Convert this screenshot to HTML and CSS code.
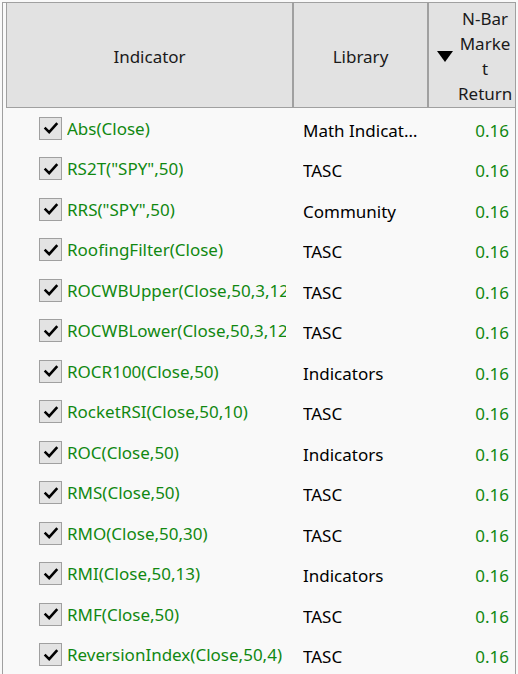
FILE: index.html
```html
<!DOCTYPE html>
<html>
<head>
<meta charset="utf-8">
<link rel="stylesheet" href="styles.css">
</head>
<body>
<div class="frame">
  <div class="grid">
    <div class="hrow">
      <div class="hcell c1">Indicator</div>
      <div class="hcell c2">Library</div>
      <div class="hcell c3"><span class="tri"></span><span class="htext">N-Bar<br>Marke<br>t<br>Return</span></div>
    </div>
    <div class="rows" id="rows"></div>
  </div>
</div>
<script src="app.js"></script>
</body>
</html>
```
FILE: app.js
```js
var data = [
  ["Abs(Close)", "Math Indicators"],
  ["RS2T(\"SPY\",50)", "TASC"],
  ["RRS(\"SPY\",50)", "Community"],
  ["RoofingFilter(Close)", "TASC"],
  ["ROCWBUpper(Close,50,3,12)", "TASC"],
  ["ROCWBLower(Close,50,3,12)", "TASC"],
  ["ROCR100(Close,50)", "Indicators"],
  ["RocketRSI(Close,50,10)", "TASC"],
  ["ROC(Close,50)", "Indicators"],
  ["RMS(Close,50)", "TASC"],
  ["RMO(Close,50,30)", "TASC"],
  ["RMI(Close,50,13)", "Indicators"],
  ["RMF(Close,50)", "TASC"],
  ["ReversionIndex(Close,50,4)", "TASC"]
];
var rows = document.getElementById("rows");
var check = '<svg viewBox="0 0 16 16" width="16" height="16"><path d="M2.6 8.6 L6.2 12.2 L13.4 4.2" fill="none" stroke="#000" stroke-width="2.6" stroke-linecap="square" stroke-linejoin="miter"/></svg>';
data.forEach(function (d) {
  var r = document.createElement("div");
  r.className = "row";
  r.innerHTML =
    '<div class="cell c1"><span class="cb">' + check + '</span><span class="name"></span></div>' +
    '<div class="cell c2"><span class="lib"></span></div>' +
    '<div class="cell c3"><span class="val">0.16</span></div>';
  r.querySelector(".name").textContent = d[0];
  r.querySelector(".lib").textContent = d[1];
  rows.appendChild(r);
});
```
FILE: styles.css
```css
html, body {
  margin: 0;
  padding: 0;
  background: #f9f9f9;
}
body {
  width: 518px;
  height: 674px;
  overflow: hidden;
  font-family: "Noto Sans", "Open Sans", sans-serif;
  font-size: 17px;
  color: #000;
}
.frame {
  margin: 2px 0 0 2px;
  border-left: 1px solid #a0a0a0;
  border-top: 1px solid #a0a0a0;
  height: 672px;
  width: 514px;
  border-right: 1px solid #a0a0a0;
  padding-left: 3px;
  box-sizing: border-box;
}
.grid {
  width: 509px;
}
.hrow {
  display: grid;
  grid-template-columns: 287px 135px 86px;
  height: 105px;
  background: #e2e2e2;
  border-left: 1px solid #a0a0a0;
  border-bottom: 1px solid #a0a0a0;
  box-sizing: border-box;
}
.hcell {
  display: flex;
  align-items: center;
  justify-content: center;
  color: #1a1a1a;
  padding-top: 3px;
}
.hcell.c1, .hcell.c2 {
  border-right: 2px solid #a0a0a0;
}
.hcell.c3 {
  justify-content: flex-start;
  padding-left: 8px;
  padding-top: 2px;
  gap: 5px;
}
.tri {
  width: 0;
  height: 0;
  border-left: 8.5px solid transparent;
  border-right: 8.5px solid transparent;
  border-top: 11px solid #000;
  flex: none;
  margin-top: 0;
}
.htext {
  width: 54px;
  text-align: center;
  line-height: 25px;
  white-space: nowrap;
}
.rows {
  padding-left: 1px;
  padding-top: 2px;
}
.row {
  display: grid;
  grid-template-columns: 287px 135px 86px;
  height: 40.5px;
  align-items: center;
}
.cell {
  overflow: hidden;
  white-space: nowrap;
}
.cell.c1 {
  display: flex;
  align-items: center;
  padding-left: 32px;
  padding-right: 8px;
  margin-top: -4px;
}
.cb {
  width: 21px;
  height: 21px;
  border: 1px solid #a0a0a0;
  background: #e3e3e3;
  display: flex;
  align-items: center;
  justify-content: center;
  flex: none;
  margin-right: 5px;
}
.cb svg {
  display: block;
}
.name {
  color: #118811;
  overflow: hidden;
  white-space: nowrap;
}
.cell.c2 {
  padding-left: 9px;
  padding-right: 10px;
}
.lib {
  display: block;
  overflow: hidden;
  text-overflow: ellipsis;
  white-space: nowrap;
}
.cell.c3 {
  text-align: right;
  padding-right: 6px;
  color: #118811;
}
```
